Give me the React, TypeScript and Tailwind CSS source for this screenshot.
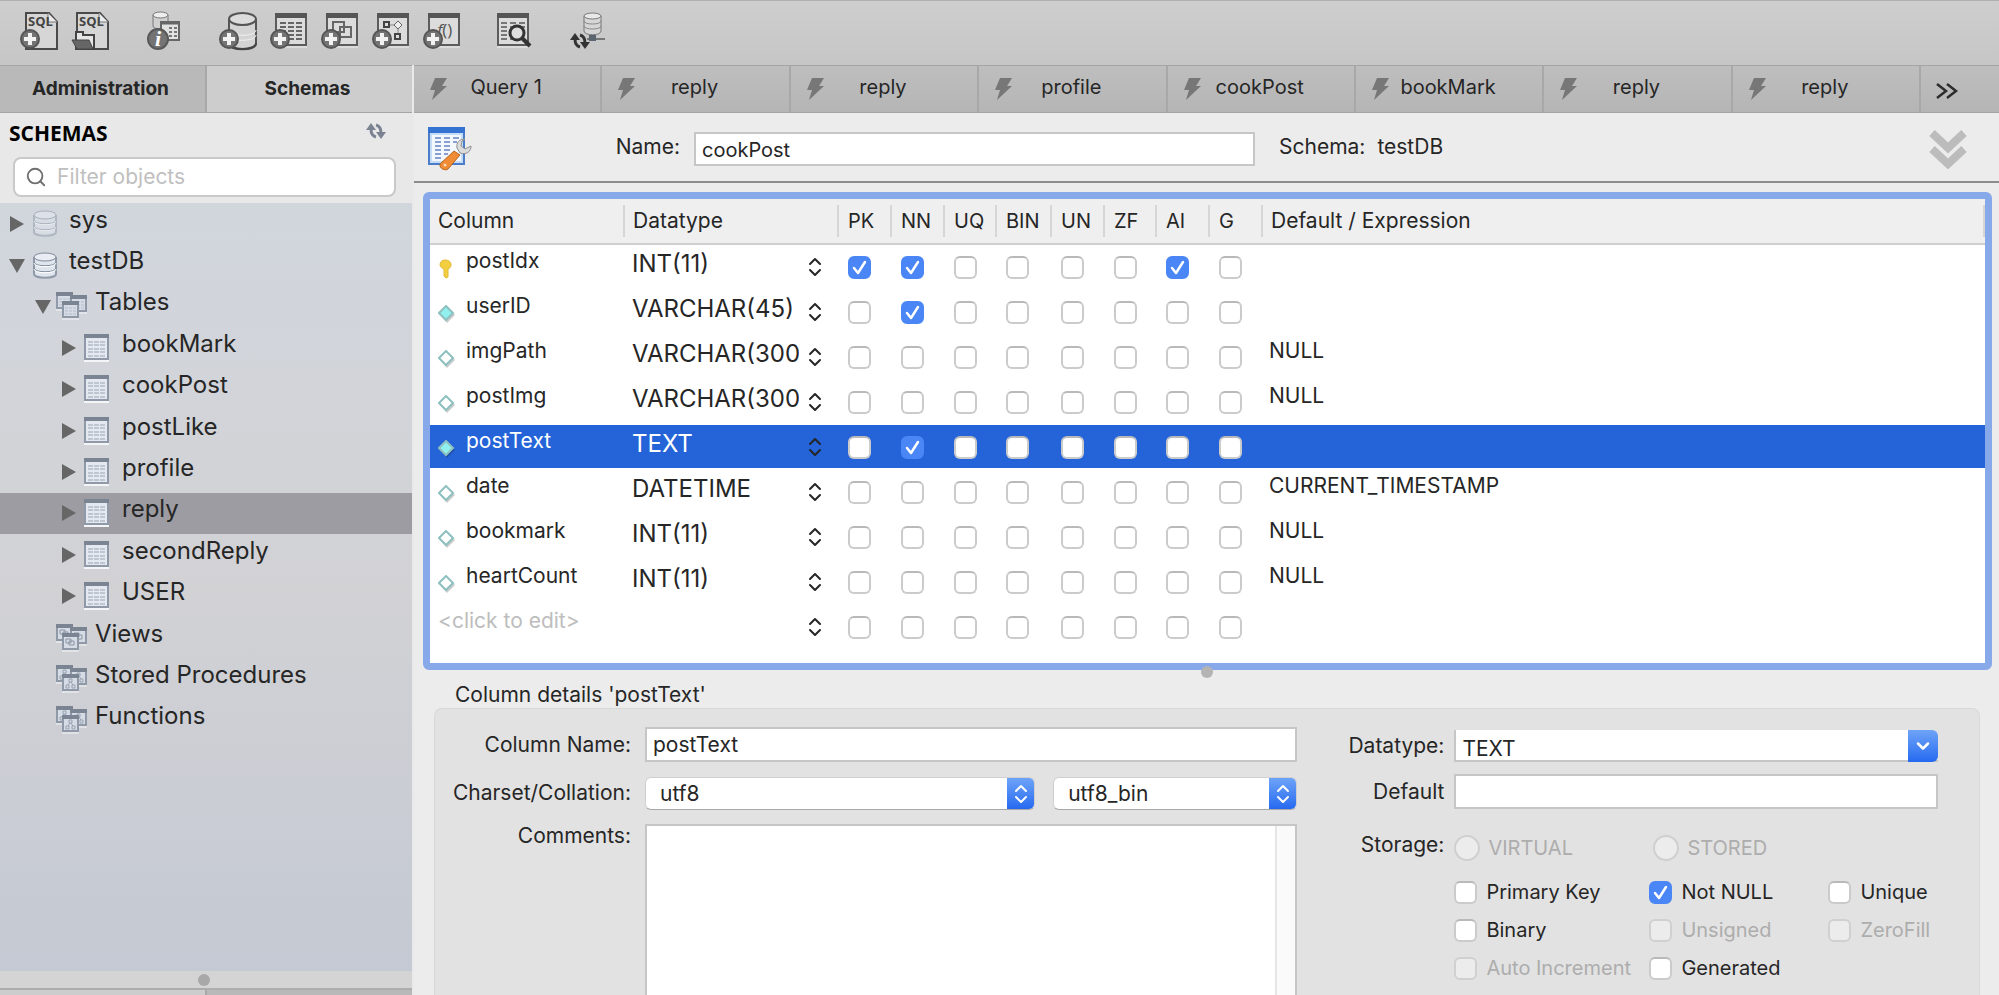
import { useState } from 'react';
import type { ReactNode } from 'react';
import { ChevronDown, Search } from 'lucide-react';

const FLAGS = ['PK', 'NN', 'UQ', 'BIN', 'UN', 'ZF', 'AI', 'G'];

interface TableColumn {
  name: string;
  type: string;
  flags: string[];
  defaultValue: string;
}

const initialColumns: TableColumn[] = [
  { name: 'postIdx', type: 'INT(11)', flags: ['PK', 'NN', 'AI'], defaultValue: '' },
  { name: 'userID', type: 'VARCHAR(45)', flags: ['NN'], defaultValue: '' },
  { name: 'imgPath', type: 'VARCHAR(300)', flags: [], defaultValue: 'NULL' },
  { name: 'postImg', type: 'VARCHAR(300)', flags: [], defaultValue: 'NULL' },
  { name: 'postText', type: 'TEXT', flags: ['NN'], defaultValue: '' },
  { name: 'date', type: 'DATETIME', flags: [], defaultValue: 'CURRENT_TIMESTAMP' },
  { name: 'bookmark', type: 'INT(11)', flags: [], defaultValue: 'NULL' },
  { name: 'heartCount', type: 'INT(11)', flags: [], defaultValue: 'NULL' },
  { name: '', type: '', flags: [], defaultValue: '' },
];

const queryTabs = ['Query 1', 'reply', 'reply', 'profile', 'cookPost', 'bookMark', 'reply', 'reply'];

type IconKind = 'db' | 'tables' | 'table' | 'views' | 'routines';

interface TreeNode {
  label: string;
  level: number;
  icon: IconKind;
  open?: boolean;
  leaf?: boolean;
  faded?: boolean;
}

const tree: TreeNode[] = [
  { label: 'sys', level: 0, icon: 'db', faded: true },
  { label: 'testDB', level: 0, icon: 'db', open: true },
  { label: 'Tables', level: 1, icon: 'tables', open: true },
  { label: 'bookMark', level: 2, icon: 'table' },
  { label: 'cookPost', level: 2, icon: 'table' },
  { label: 'postLike', level: 2, icon: 'table' },
  { label: 'profile', level: 2, icon: 'table' },
  { label: 'reply', level: 2, icon: 'table' },
  { label: 'secondReply', level: 2, icon: 'table' },
  { label: 'USER', level: 2, icon: 'table' },
  { label: 'Views', level: 1, icon: 'views', leaf: true },
  { label: 'Stored Procedures', level: 1, icon: 'routines', leaf: true },
  { label: 'Functions', level: 1, icon: 'routines', leaf: true },
];

/* ---------- toolbar icons ---------- */

function PlusBadge() {
  return (
    <g>
      <circle cx="10" cy="28" r="9" fill="#747474" stroke="#555" strokeWidth="2" />
      <path d="M10 22v12M4 28h12" stroke="#f2f2f2" strokeWidth="4" />
    </g>
  );
}

function SqlPage({ children }: { children: ReactNode }) {
  return (
    <>
      <path d="M6 38V2h23l8 9v27z" fill="#d6d6d6" stroke="#4a4a4a" strokeWidth="2" />
      <path d="M28 2v9h9" fill="#ececec" stroke="#777" strokeWidth="1" />
      <text x="8" y="15" fontSize="13" fontWeight="700" fill="#444" fontFamily="Open Sans, sans-serif">
        SQL
      </text>
      {children}
    </>
  );
}

function WindowFrame({ x = 5 }: { x?: number }) {
  return (
    <g>
      <rect x={x + 1} y="3" width="30" height="31" fill="#dcdcdc" stroke="#5c5c5c" strokeWidth="2" />
      <rect x={x} y="2" width="32" height="5" fill="#555" />
      <path d={`M${x} 36h32`} stroke="#eee" strokeWidth="1" />
    </g>
  );
}

/* pair of curved arrows, 20x16 */
function CycleArrows({ color }: { color: string }) {
  return (
    <g fill={color}>
      <path d="M5 0l5 7H0z" />
      <path d="M15 16l-5-7h10z" />
      <path d="M5 6c0 4 1 7 5 8M15 10c0-4-1-7-5-8" fill="none" stroke={color} strokeWidth="3" />
    </g>
  );
}

const toolbarGroups: { label: string; art: ReactNode }[][] = [
  [
    { label: 'New SQL tab', art: <SqlPage><PlusBadge /></SqlPage> },
    {
      label: 'Open SQL script',
      art: (
        <SqlPage>
          <path d="M5 30V21h7v3h11v14H5z" fill="#e6e6e6" stroke="#444" strokeWidth="2" />
          <path d="M1 29h17l4 9H6z" fill="#666" stroke="#444" strokeWidth="1" />
        </SqlPage>
      ),
    },
  ],
  [
    {
      label: 'Inspector',
      art: (
        <>
          <path d="M8 4v11c0 4 15 4 15 0V4" fill="#cfcfcf" stroke="#777" />
          <ellipse cx="15.500" cy="4" rx="7.500" ry="3" fill="#eee" stroke="#777" />
          <rect x="16" y="11" width="18" height="18" fill="#e2e2e2" stroke="#666" strokeWidth="2" />
          <path d="M15 12h20" stroke="#666" strokeWidth="3" />
          <path d="M24 17h8M24 21h8M24 25h8" stroke="#777" strokeWidth="2" strokeDasharray="3 2" />
          <circle cx="13" cy="28" r="10" fill="#747474" stroke="#585858" strokeWidth="2" />
          <text x="10" y="35" fontSize="22" fontStyle="italic" fontWeight="700" fill="#fff" fontFamily="Liberation Serif, serif">
            i
          </text>
        </>
      ),
    },
  ],
  [
    {
      label: 'Create schema',
      art: (
        <>
          <path d="M10 8v25c0 7 27 7 27 0V8" fill="#d4d4d4" stroke="#555" strokeWidth="2" />
          <path d="M10 19c0 7 27 7 27 0M10 24c0 7 27 7 27 0" fill="none" stroke="#f2f2f2" />
          <path d="M10 32c0 8 27 8 27 0" fill="none" stroke="#444" strokeWidth="2" />
          <ellipse cx="23.500" cy="8" rx="13.500" ry="6" fill="#dcdcdc" stroke="#555" strokeWidth="2" />
          <PlusBadge />
        </>
      ),
    },
    {
      label: 'Create table',
      art: (
        <>
          <WindowFrame />
          <path d="M10 12h23M10 16h23M10 20h23M10 24h23M10 28h23" stroke="#666" strokeWidth="2" strokeDasharray="6 2" />
          <PlusBadge />
        </>
      ),
    },
    {
      label: 'Create view',
      art: (
        <>
          <WindowFrame />
          <rect x="12" y="11" width="11" height="10" fill="none" stroke="#666" strokeWidth="2" />
          <rect x="19" y="16" width="11" height="10" fill="none" stroke="#666" strokeWidth="2" />
          <PlusBadge />
        </>
      ),
    },
    {
      label: 'Create procedure',
      art: (
        <>
          <WindowFrame />
          <path d="M18 14h4M26 17v5" stroke="#888" />
          <rect x="12" y="11" width="5" height="5" fill="#ddd" stroke="#444" strokeWidth="2" />
          <path d="M26 10l4 4-4 4-4-4z" fill="#eee" stroke="#666" />
          <rect x="23" y="23" width="5" height="5" fill="#ddd" stroke="#444" strokeWidth="2" />
          <PlusBadge />
        </>
      ),
    },
    {
      label: 'Create function',
      art: (
        <>
          <WindowFrame />
          <text x="14" y="25" fontSize="17" fill="#555" fontFamily="Open Sans, sans-serif">
            <tspan fontStyle="italic">f</tspan>()
          </text>
          <PlusBadge />
        </>
      ),
    },
  ],
  [
    {
      label: 'Search table data',
      art: (
        <>
          <WindowFrame x={0} />
          <path d="M4 12h24M4 16h24M4 20h24M4 24h24M4 28h24" stroke="#777" strokeWidth="2" strokeDasharray="6 3" />
          <circle cx="20" cy="22" r="7" fill="#dedede" stroke="#333" strokeWidth="3" />
          <path d="M25 27l8 8" stroke="#333" strokeWidth="4" />
        </>
      ),
    },
  ],
  [
    {
      label: 'Reconnect',
      art: (
        <>
          <path d="M13 5v15c0 5 17 5 17 0V5" fill="#d6d6d6" stroke="#777" />
          <path d="M13 10c0 4 17 4 17 0M13 15c0 4 17 4 17 0" fill="none" stroke="#888" />
          <ellipse cx="21.500" cy="5" rx="8.500" ry="3" fill="#e8e8e8" stroke="#777" />
          <path d="M16 28h18" stroke="#777" strokeWidth="2" />
          <rect x="18" y="24" width="7" height="6" fill="#5a6570" />
          <g transform="translate(-1 22)">
            <CycleArrows color="#333" />
          </g>
        </>
      ),
    },
  ],
];

/* ---------- small icons ---------- */

function RefreshIcon() {
  return (
    <svg width="20" height="16" viewBox="0 0 20 16">
      <CycleArrows color="#7b8392" />
    </svg>
  );
}

function BoltIcon() {
  return (
    <svg width="19" height="24" viewBox="0 0 19 24" fill="#777" className="shrink-0">
      <path d="M6 1h12l-5 8h5L3 23l3-10H1z" />
    </svg>
  );
}

function MiniWindow({ x, y, kind }: { x: number; y: number; kind: IconKind }) {
  return (
    <g transform={`translate(${x} ${y})`}>
      <rect x="1" y="1" width="15" height="15" fill="#d6dce6" stroke="#8f99a7" strokeWidth="2" />
      <path d="M0 2h17" stroke="#7a8492" strokeWidth="4" />
      {kind === 'tables' && <path d="M3 7h11M3 10h11M3 13h11" stroke="#b4bdca" strokeDasharray="3 1" />}
      {kind === 'views' && <path d="M4 6h5v4H4zM7 8h5v4H7z" fill="none" stroke="#8b95a3" />}
      {kind === 'routines' && <path d="M7 5h3v3H7zM4 11h3v3H4zM10 11h3v3h-3zM8 8l-2 3M9 8l2 3" fill="none" stroke="#98a2b0" />}
      <path d="M0 18h17" stroke="#f4f5f7" strokeWidth="1" />
    </g>
  );
}

function TreeIcon({ kind, faded }: { kind: IconKind; faded?: boolean }) {
  if (kind === 'db') {
    return (
      <svg width="24" height="27" viewBox="0 0 24 27" className={faded ? 'opacity-50' : ''}>
        <path d="M1 5v17c0 5 22 5 22 0V5" fill="#dfe5ed" stroke="#8f99a7" strokeWidth="2" />
        <path d="M1 10c0 5 22 5 22 0M1 16c0 5 22 5 22 0" fill="none" stroke="#7f8a99" strokeWidth="1" />
        <path d="M1 11c0 5 22 5 22 0M1 17c0 5 22 5 22 0" fill="none" stroke="#fff" />
        <ellipse cx="12" cy="5" rx="11" ry="4" fill="#e9edf3" stroke="#7f8a99" strokeWidth="1" />
      </svg>
    );
  }
  if (kind === 'table') {
    return (
      <svg width="25" height="28" viewBox="0 0 25 28">
        <rect x="1" y="1" width="23" height="24" fill="#e4e9f1" stroke="#8f99a7" strokeWidth="2" />
        <path d="M0 2h25" stroke="#7a8492" strokeWidth="4" />
        <path d="M4 8h17M4 11h17M4 15h17M4 18h17M4 22h17" stroke="#9ba3b0" strokeWidth="1" strokeDasharray="5 1" />
        <path d="M0 27h25" stroke="#f4f5f7" strokeWidth="2" />
      </svg>
    );
  }
  return (
    <svg width="31" height="28" viewBox="0 0 31 28">
      <MiniWindow x={0} y={0} kind={kind} />
      <MiniWindow x={14} y={3} kind={kind} />
      <MiniWindow x={6} y={9} kind={kind} />
    </svg>
  );
}

function TableEditorIcon() {
  return (
    <svg width="44" height="44" viewBox="0 0 44 44">
      <rect x="1" y="1" width="35" height="36" fill="#c4dcf8" stroke="#4a7cc8" strokeWidth="2" />
      <rect x="0" y="0" width="37" height="6" fill="#3573d2" />
      <rect x="4" y="8" width="29" height="26" fill="#f3f8ff" />
      <path d="M7 11h6M7 15h6M7 19h6M7 23h6M7 27h6M7 31h6M16 11h6M16 15h6M16 19h6M16 23h6M16 27h4M25 11h6M25 15h4" stroke="#8a9fd0" strokeWidth="2" />
      <path d="M37 12c-6 0-9 4-8 9l3 5c6 2 11-1 11-7l-6 3-4-3 1-5z" fill="#dcdcdc" stroke="#8f8f8f" />
      <path d="M26 24l6 4-12 14c-2 2-9 0-8-5z" fill="#f08c35" stroke="#b8651c" />
      <circle cx="17" cy="38" r="1.500" fill="#fbd9b0" />
    </svg>
  );
}

function ColumnIcon({ column }: { column: TableColumn }) {
  if (column.flags.includes('PK')) {
    return (
      <svg width="17" height="20" viewBox="0 0 17 20" className="shrink-0">
        <path d="M7 1c4 0 6 2 6 5 0 2-1 3-3 4v8l-2 1-2-2v-7C4 9 2 8 2 6c0-3 2-5 5-5z" fill="#f3cf3f" stroke="#e0b93a" />
      </svg>
    );
  }
  return (
    <svg width="17" height="18" viewBox="0 0 17 18" className="shrink-0">
      <path d="M9 2l8 8-8 8-7-8z" fill="#000" opacity="0.2" />
      <path d="M8 1l7 7-7 7-7-7z" fill={column.flags.includes('NN') ? '#8ff0ee' : '#fff'} stroke="#8fc0c0" strokeWidth="2" />
    </svg>
  );
}

/* ---------- controls ---------- */

interface CheckboxProps {
  label?: string;
  checked: boolean;
  disabled?: boolean;
  onChange?: () => void;
}

function Checkbox({ label, checked, disabled, onChange }: CheckboxProps) {
  return (
    <span className="relative inline-flex size-[23px] shrink-0 align-middle">
      <input
        type="checkbox"
        aria-label={label}
        checked={checked}
        disabled={disabled}
        onChange={onChange}
        className="peer size-full appearance-none rounded-md border-2 border-[#cbcbcb] border-t-[#b9b9b9] bg-white checked:border-[#4a86f5] checked:bg-[#4a86f5] disabled:border-[#d0d0d0] disabled:bg-[#ececec]"
      />
      <svg viewBox="0 0 23 23" className="pointer-events-none absolute inset-0 hidden peer-checked:block">
        <path d="M6 12l4 5 7-11" fill="none" stroke="#fff" strokeWidth="2.500" strokeLinecap="round" strokeLinejoin="round" />
      </svg>
    </span>
  );
}

function PopupSelect({ id, label, options, className }: { id: string; label: string; options: string[]; className: string }) {
  return (
    <div className={`flex h-[33px] overflow-hidden rounded-md border border-[#cfcfcf] border-b-[#a8a8a8] bg-white ${className}`}>
      <select id={id} aria-label={label} className="min-w-0 flex-1 appearance-none pl-3.5 outline-none">
        {options.map((option) => (
          <option key={option}>{option}</option>
        ))}
      </select>
      <span className="flex w-[27px] items-center justify-center bg-linear-to-b from-[#6ea3f7] to-[#2569f0] text-white">
        <UpDownArrows />
      </span>
    </div>
  );
}

function UpDownArrows() {
  return (
    <svg width="14" height="20" viewBox="0 0 14 20" fill="none" stroke="currentColor" strokeWidth="2" strokeLinecap="round" strokeLinejoin="round">
      <path d="M2 7l5-5 5 5M2 13l5 5 5-5" />
    </svg>
  );
}

function Sidebar() {
  const [selected, setSelected] = useState('reply');

  return (
    <aside className="flex w-[414px] shrink-0 flex-col border-r-2 border-[#e9e9e9]">
      <div className="flex h-12 shrink-0 border-y border-[#a5a5a5] text-[19px] font-bold">
        <button className="flex-1 border-r-2 border-[#a8a8a8] bg-[#b9b9b9] pr-1">Administration</button>
        <button className="flex-1 bg-[#cdcdcd] pr-1">Schemas</button>
      </div>
      <div className="shrink-0 bg-[#e8e8e8] pb-1.5 pl-[13px] pr-4">
        <div className="-ml-1 flex h-11 items-center justify-between pr-2.5">
          <h2 className="pb-1 font-['Open_Sans',sans-serif] text-[21px] font-bold text-black">SCHEMAS</h2>
          <button aria-label="Refresh" className="pb-2">
            <RefreshIcon />
          </button>
        </div>
        <label className="flex h-10 items-center gap-2.5 rounded-lg border-2 border-[#c9c9c9] bg-white px-2.5 text-[#6f6f6f]">
          <Search className="size-[22px]" strokeWidth={2} />
          <input
            type="text"
            placeholder="Filter objects"
            aria-label="Filter objects"
            className="min-w-0 flex-1 outline-none placeholder:text-[#bfbfbf]"
          />
        </label>
      </div>
      <div className="min-h-0 flex-1 overflow-hidden bg-linear-to-b from-[#d1d6dd] via-[#d2d2d5] to-[#c4c9d3]">
        <ul className="grid h-[538px] auto-rows-fr text-[24px] leading-7">
          {tree.map((node) => (
            <li key={node.label} className={selected === node.label ? 'bg-[#9d9ca3]' : ''}>
              <button
                onClick={() => setSelected(node.label)}
                className={`flex h-full w-full items-center text-left ${
                  node.level === 0 ? 'pl-2' : node.level === 1 ? 'pl-[34px]' : 'pl-[60px]'
                }`}
              >
                <span className={node.level === 1 ? 'w-[22px]' : 'w-6'}>
                  {!node.leaf && (
                    <svg width="18" height="18" viewBox="0 0 18 18" fill="#666">
                      {node.open ? <path d="M1 3h16L9 17z" /> : <path d="M2 1l14 8-14 8z" />}
                    </svg>
                  )}
                </span>
                <span className={node.level === 0 ? 'w-[37px] pl-px' : node.level === 1 ? 'w-[39px]' : 'w-[38px]'}>
                  <TreeIcon kind={node.icon} faded={node.faded} />
                </span>
                <span className="pb-2">{node.label}</span>
              </button>
            </li>
          ))}
        </ul>
      </div>
      <div className="flex h-[17px] shrink-0 items-center justify-center bg-[#d4d4d4] pr-1">
        <span className="size-3 rounded-full bg-[#a8a8a8]" />
      </div>
      <div className="flex h-[7px] shrink-0 border-t-2 border-[#adadad]">
        <span className="flex-1 border-r-2 border-[#a8a8a8] bg-[#cdcdcd]" />
        <span className="flex-1 bg-[#b9b9b9]" />
      </div>
    </aside>
  );
}

export default function App() {
  const [columns, setColumns] = useState(initialColumns);
  const [current, setCurrent] = useState(4);
  const column = columns[current];

  const toggleFlag = (index: number, flag: string) => {
    setColumns(
      columns.map((item, i) => {
        if (i !== index) return item;
        const flags = item.flags.includes(flag) ? item.flags.filter((f) => f !== flag) : [...item.flags, flag];
        return { ...item, flags };
      })
    );
  };

  const updateColumn = (field: 'name' | 'type' | 'defaultValue', value: string) => {
    setColumns(columns.map((item, i) => (i === current ? { ...item, [field]: value } : item)));
  };

  const options = [
    { label: 'Primary Key', flag: 'PK' },
    { label: 'Not NULL', flag: 'NN' },
    { label: 'Unique', flag: 'UQ' },
    { label: 'Binary', flag: 'BIN' },
    { label: 'Unsigned', flag: 'UN', disabled: true },
    { label: 'ZeroFill', flag: 'ZF', disabled: true },
    { label: 'Auto Increment', flag: 'AI', disabled: true },
    { label: 'Generated', flag: 'G' },
  ];

  return (
    <div className="flex h-screen flex-col overflow-hidden bg-[#ececec] font-[Inter,sans-serif] text-[21px] leading-6 text-[#262626]">
      <header className="flex h-[65px] shrink-0 items-center gap-9 border-t border-[#b0b0b0] bg-linear-to-b from-[#cecece] to-[#c6c6c6] pb-1 pl-5">
        {toolbarGroups.map((group) => (
          <div key={group[0].label} className="flex gap-[13px]">
            {group.map((item) => (
              <button key={item.label} aria-label={item.label}>
                <svg width="38" height="40" viewBox="0 0 38 40" className="overflow-visible">
                  {item.art}
                </svg>
              </button>
            ))}
          </div>
        ))}
      </header>

      <div className="flex min-h-0 flex-1">
        <Sidebar />

        <main className="flex min-w-0 flex-1 flex-col">
          <nav className="flex h-12 shrink-0 border-y border-[#a5a5a5] bg-linear-to-b from-[#bebebe] to-[#b5b5b5] text-[20px]">
            {queryTabs.map((tab, i) => (
              <button key={i} className="flex min-w-0 flex-1 items-center border-r-2 border-[#a8a8a8] pl-[15px] pr-4">
                <BoltIcon />
                <span className="flex-1 pb-1 pr-5">{tab}</span>
              </button>
            ))}
            <button aria-label="More tabs" className="w-[78px] pl-3.5 pt-1">
              <svg width="24" height="18" viewBox="0 0 24 18" fill="none" stroke="#2d2d2d" strokeWidth="2.500">
                <path d="M2 2l9 7-9 7M12 2l9 7-9 7" />
              </svg>
            </button>
          </nav>

          <div className="flex h-[70px] shrink-0 items-center border-b-2 border-[#8c8c8c] pl-3.5 pr-8 pt-1">
            <TableEditorIcon />
            <label htmlFor="table-name" className="w-[208px] pb-1 text-right">
              Name:
            </label>
            <input
              id="table-name"
              defaultValue="cookPost"
              className="ml-3.5 h-[34px] w-[561px] border-2 border-[#c6c6c6] bg-white px-1.5 pt-0.5 text-[20px] outline-none"
            />
            <span className="ml-6 pb-1">Schema:</span>
            <span className="ml-3 pb-1">testDB</span>
            <button aria-label="Collapse header" className="ml-auto">
              <svg width="38" height="40" viewBox="0 0 38 40" fill="none" stroke="#bcbcbc" strokeWidth="8">
                <path d="M3 4l16 15L35 4M3 20l16 15 16-15" />
              </svg>
            </button>
          </div>

          <div className="mx-[7px] ml-[9px] mt-[9px] shrink-0 rounded-md border-[7px] border-[#87a8e9] bg-white pb-[13px]">
            <table className="w-full table-fixed border-separate border-spacing-0">
              <colgroup>
                <col className="w-[195px]" />
                <col className="w-[214px]" />
                {FLAGS.map((flag) => (
                  <col key={flag} className={flag === 'BIN' ? 'w-[55px]' : flag === 'UQ' || flag === 'ZF' ? 'w-[52px]' : 'w-[53px]'} />
                ))}
                <col />
              </colgroup>
              <thead>
                <tr className="h-[46px] bg-[#efefef] text-left">
                  {['Column', 'Datatype', ...FLAGS, 'Default / Expression'].map((title) => (
                    <th key={title} className="border-b-2 border-[#cfcfcf] p-0 font-normal">
                      <span
                        className={`block border-r-2 border-[#d6d6d6] py-1 ${FLAGS.includes(title) ? 'pl-[9px] text-[20px]' : 'pl-2'}`}
                      >
                        {title}
                      </span>
                    </th>
                  ))}
                </tr>
              </thead>
              <tbody>
                {columns.map((item, i) => (
                  <tr
                    key={i}
                    onClick={() => setCurrent(i)}
                    className={`h-[45px] ${i === current ? 'bg-[#2464d8] text-white' : ''}`}
                  >
                    <td className="border-b-2 border-white p-0 pl-2">
                      {item.name ? (
                        <span className="flex items-center gap-[11px]">
                          <span className="pt-1">
                            <ColumnIcon column={item} />
                          </span>
                          <span className="pb-3">{item.name}</span>
                        </span>
                      ) : (
                        <span className="block pb-3 text-[#bdbdbd]">&lt;click to edit&gt;</span>
                      )}
                    </td>
                    <td className="border-b-2 border-white p-0 pl-[7px]">
                      <span className="flex items-center gap-[9px]">
                        <select
                          aria-label={`Datatype of ${item.name || 'new column'}`}
                          className="h-9 w-[167px] appearance-none overflow-hidden pb-1.5 text-[24px] text-clip outline-none"
                        >
                          <option>{item.type}</option>
                        </select>
                        <span className="text-[#262626]">
                          <UpDownArrows />
                        </span>
                      </span>
                    </td>
                    {FLAGS.map((flag) => (
                      <td key={flag} className="border-b-2 border-white p-0 pl-[9px]">
                        <Checkbox
                          label={`${flag} ${item.name}`}
                          checked={item.flags.includes(flag)}
                          onChange={() => toggleFlag(i, flag)}
                        />
                      </td>
                    ))}
                    <td className="border-b-2 border-white p-0 pb-3 pl-1.5">{item.defaultValue}</td>
                  </tr>
                ))}
              </tbody>
            </table>
          </div>

          <div className="relative h-[38px] shrink-0 pl-[41px] pt-[13px]">
            <span className="absolute -top-1 left-1/2 size-3 -translate-x-1/2 rounded-full bg-[#b4b4b4]" />
            <h3>Column details '{column.name}'</h3>
          </div>

          <section className="ml-5 mr-[19px] flex min-h-0 flex-1 gap-10 overflow-hidden rounded-t-lg border border-b-0 border-[#d8d8d8] bg-[#e2e2e2] pl-2 pr-[41px] pt-[18px]">
            <div className="grid flex-[855] grid-cols-[188px_1fr] grid-rows-[35px_32px_1fr] gap-x-3.5 gap-y-[15px]">
              <label htmlFor="column-name" className="self-center text-right">
                Column Name:
              </label>
              <input
                id="column-name"
                value={column.name}
                onChange={(e) => updateColumn('name', e.target.value)}
                className="min-w-0 border-2 border-[#c6c6c6] bg-white px-1.5 outline-none"
              />
              <label htmlFor="charset" className="self-center text-right">
                Charset/Collation:
              </label>
              <div className="flex gap-[18px]">
                <PopupSelect id="charset" label="Charset" options={['utf8', 'utf8mb4', 'latin1']} className="flex-[391]" />
                <PopupSelect id="collation" label="Collation" options={['utf8_bin', 'utf8_general_ci']} className="flex-[244]" />
              </div>
              <label htmlFor="comments" className="text-right">
                Comments:
              </label>
              <div className="flex border-2 border-b-0 border-[#c6c6c6] bg-white">
                <textarea id="comments" className="min-w-0 flex-1 resize-none p-1.5 outline-none" />
                <span className="w-5 border-l-2 border-[#e6e6e6] bg-[#fafafa]" />
              </div>
            </div>

            <div className="flex-[601]">
              <div className="grid grid-cols-[107px_1fr] gap-x-2.5">
                <label htmlFor="datatype" className="mt-[7px] text-right">
                  Datatype:
                </label>
                <div className="mt-[3px] flex h-8 border-b-2 border-l-2 border-[#c6c6c6]">
                  <input
                    id="datatype"
                    value={column.type}
                    onChange={(e) => updateColumn('type', e.target.value)}
                    className="min-w-0 flex-1 bg-white px-1.5 pt-2 outline-none"
                  />
                  <button aria-label="Choose datatype" className="flex h-8 w-[30px] items-center justify-center rounded-r-md bg-linear-to-b from-[#6ea3f7] to-[#2569f0] text-white">
                    <ChevronDown className="size-5" strokeWidth={3} />
                  </button>
                </div>
                <label htmlFor="default" className="mt-[18px] text-right">
                  Default
                </label>
                <input
                  id="default"
                  value={column.defaultValue}
                  onChange={(e) => updateColumn('defaultValue', e.target.value)}
                  className="mt-3 h-[35px] min-w-0 border-2 border-[#c6c6c6] bg-white px-1.5 outline-none"
                />
                <span className="mt-6 text-right">Storage:</span>
                <div className="mt-[26px] flex text-[20px] text-[#adadad]">
                  {['VIRTUAL', 'STORED'].map((kind) => (
                    <label key={kind} className="flex w-[199px] items-center gap-2">
                      <input type="radio" name="storage" disabled className="size-[26px] appearance-none rounded-full border-2 border-[#cfcfcf] bg-[#ececec]" />
                      {kind}
                    </label>
                  ))}
                </div>
              </div>
              <div className="ml-[117px] mt-[19px] grid grid-cols-[195px_179px_1fr] gap-y-3.5 text-[20px]">
                {options.map((option) => (
                  <label
                    key={option.flag}
                    className={`flex items-center gap-[9px] whitespace-nowrap ${option.disabled ? 'text-[#adadad]' : ''}`}
                  >
                    <Checkbox
                      checked={column.flags.includes(option.flag)}
                      disabled={option.disabled}
                      onChange={() => toggleFlag(current, option.flag)}
                    />
                    {option.label}
                  </label>
                ))}
              </div>
            </div>
          </section>
        </main>
      </div>
    </div>
  );
}
